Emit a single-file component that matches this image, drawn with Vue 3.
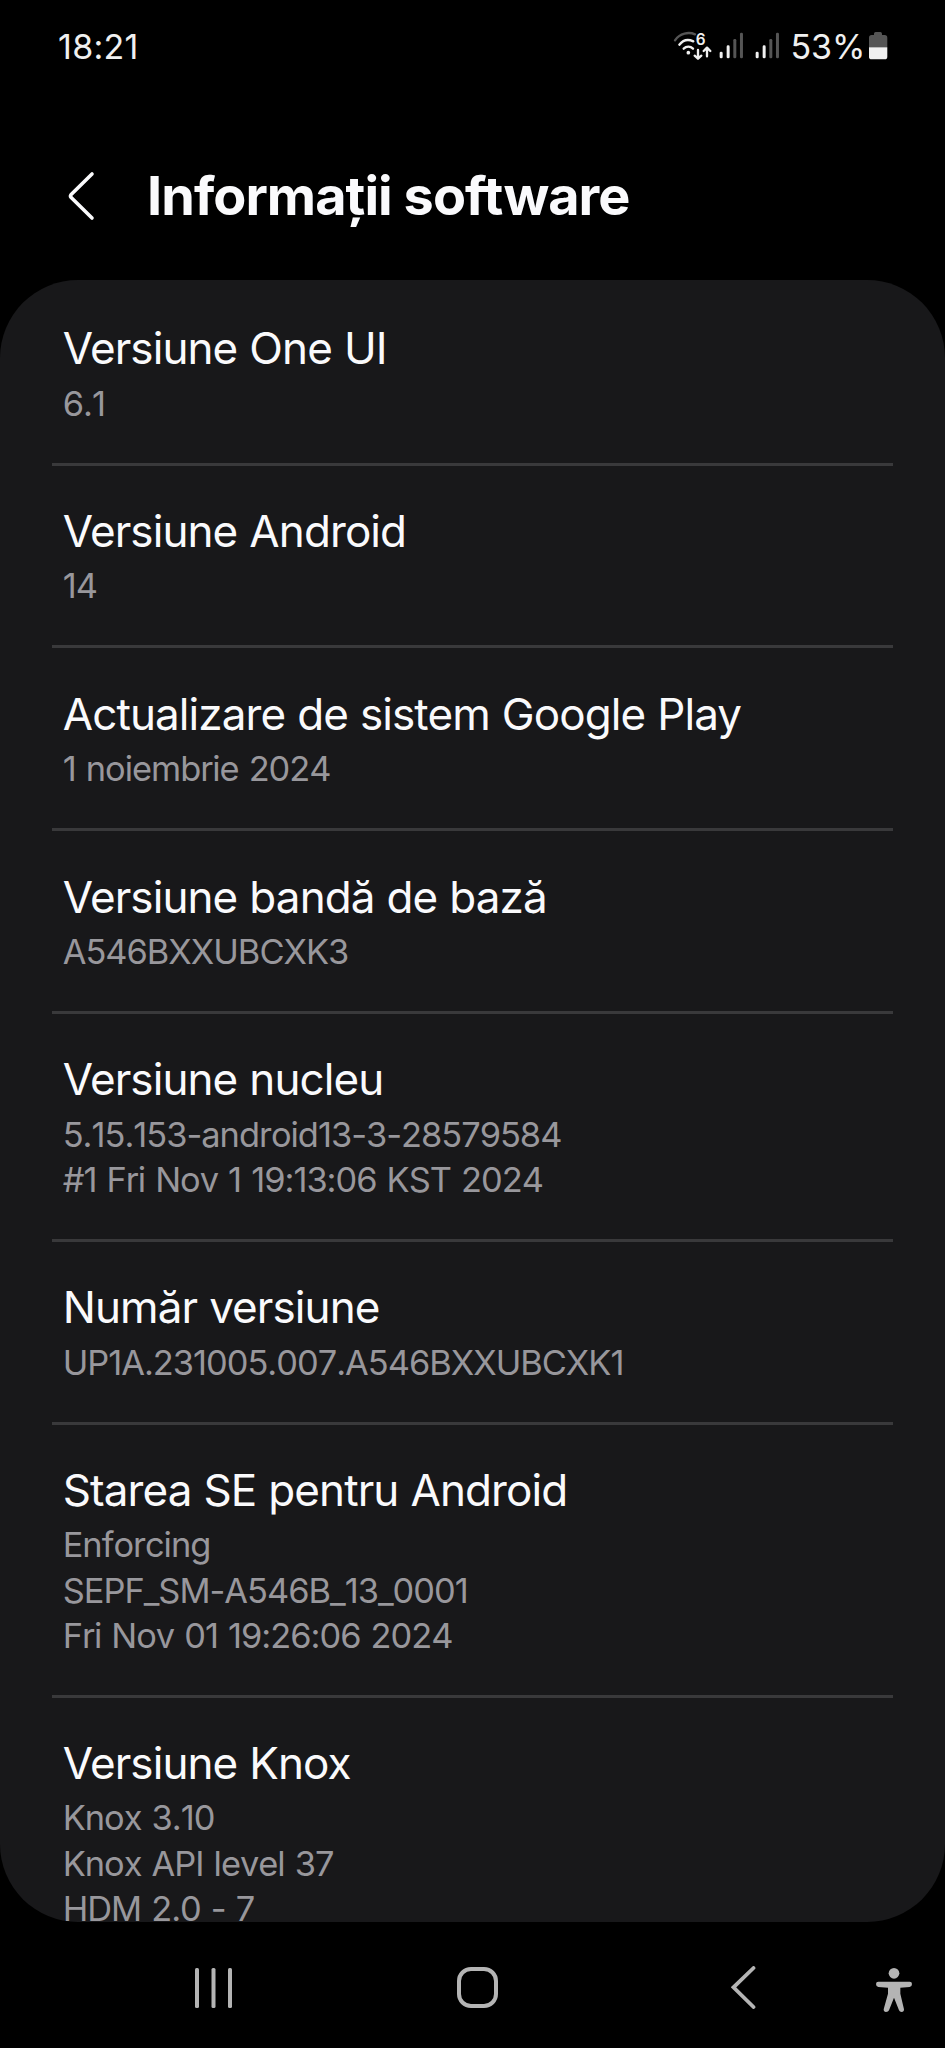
<template>
  <div class="screen">
    <header class="status-bar">
      <span class="status-time">18:21</span>
      <div class="status-tray">
        <!-- Wi-Fi 6 with traffic arrows -->
        <svg class="wifi" viewBox="0 0 117 90" fill="none" stroke-linecap="round" stroke-linejoin="round">
          <path d="M6 28 C20 6 48 2 66 10" stroke="#555" stroke-width="7" />
          <path d="M19 41 C30 27 46 24 61 31" stroke="#f0f0f0" stroke-width="7" />
          <path d="M32 53 C40 45 52 45 60 53" stroke="#f0f0f0" stroke-width="7" />
          <circle cx="46" cy="65" r="5.5" fill="#f0f0f0" />
          <text x="68" y="41" class="wifi-gen">6</text>
          <path d="M75 57 V82 M65 74 L75 83 L85 74" stroke="#f0f0f0" stroke-width="7" />
          <path d="M102 76 V51 M92 60 L102 50 L112 60" stroke="#f0f0f0" stroke-width="7" />
        </svg>
        <svg v-for="sim in 2" :key="sim" class="signal" viewBox="0 0 73 90">
          <rect x="2" y="62" width="9" height="20" rx="4" fill="#f0f0f0" />
          <rect x="23" y="43" width="9" height="39" rx="4" fill="#f0f0f0" />
          <rect x="43" y="24" width="9" height="58" rx="4" fill="#555" />
          <rect x="63" y="5" width="9" height="77" rx="4" fill="#555" />
        </svg>
        <span class="status-percent">53%</span>
        <svg class="battery" viewBox="0 0 55 90">
          <path d="M15 8 Q15 3 20 3 H34 Q39 3 39 8 V12 H47 Q55 12 55 20 V49 H0 V20 Q0 12 8 12 H15 Z" fill="#555" />
          <path d="M0 49 H55 V77 Q55 85 47 85 H8 Q0 85 0 77 Z" fill="#f0f0f0" />
        </svg>
      </div>
    </header>

    <div class="title-bar">
      <svg class="title-back" viewBox="0 0 28 50" fill="none">
        <path d="M25 3 L4.2 23.4 Q2.8 25 4.2 26.6 L25 47" />
      </svg>
      <h1 class="title">Informații software</h1>
    </div>

    <main class="card">
      <section v-for="item in items" :key="item.label" class="item">
        <h2 class="item-label">{{ item.label }}</h2>
        <p v-for="line in item.lines" :key="line" class="item-line">{{ line }}</p>
      </section>
    </main>

    <nav class="nav-bar">
      <svg class="nav-recents" viewBox="0 0 38 40">
        <rect x="0" y="0" width="4" height="40" rx="1.5" />
        <rect x="16.5" y="0" width="4" height="40" rx="1.5" />
        <rect x="33" y="0" width="4" height="40" rx="1.5" />
      </svg>
      <svg class="nav-home" viewBox="0 0 41 41" fill="none">
        <rect x="2" y="2" width="37" height="37" rx="12" />
      </svg>
      <svg class="nav-back" viewBox="0 0 25 43" fill="none">
        <path d="M22.5 2 L2.5 21.3 L22.5 41" />
      </svg>
      <svg class="nav-access" viewBox="0 0 108 132">
        <circle cx="54" cy="16" r="16" />
        <path
          d="M7 41 H101 Q108 41 108 48 Q108 56 101 57 L73 59 V77 L84 124 Q84 132 77 132 Q71 132 69 127 L54 89 L39 127 Q37 132 30 132 Q23 132 23 124 L36 77 V59 L7 57 Q0 56 0 48 Q0 41 7 41 Z"
        />
      </svg>
    </nav>
  </div>
</template>

<script setup>
const items = [
  { label: 'Versiune One UI', lines: ['6.1'] },
  { label: 'Versiune Android', lines: ['14'] },
  { label: 'Actualizare de sistem Google Play', lines: ['1 noiembrie 2024'] },
  { label: 'Versiune bandă de bază', lines: ['A546BXXUBCXK3'] },
  {
    label: 'Versiune nucleu',
    lines: ['5.15.153-android13-3-28579584', '#1 Fri Nov 1 19:13:06 KST 2024'],
  },
  { label: 'Număr versiune', lines: ['UP1A.231005.007.A546BXXUBCXK1'] },
  {
    label: 'Starea SE pentru Android',
    lines: ['Enforcing', 'SEPF_SM-A546B_13_0001', 'Fri Nov 01 19:26:06 2024'],
  },
  { label: 'Versiune Knox', lines: ['Knox 3.10', 'Knox API level 37', 'HDM 2.0 - 7'] },
]
</script>

<style>
body {
  margin: 0;
  background: #000;
}
</style>

<style scoped>
.screen {
  display: flex;
  flex-direction: column;
  width: 945px;
  height: 2048px;
  overflow: hidden;
  background: #000;
  color: #fafafc;
  font-family: Inter, 'Liberation Sans', sans-serif;
}

.status-bar {
  display: flex;
  justify-content: space-between;
  align-items: center;
  box-sizing: border-box;
  height: 92px;
  padding: 0 57.7px 0 58px;
  color: #f0f0f0;
  font-size: 34px;
}

.status-time {
  letter-spacing: 0.3px;
}

.status-tray {
  display: flex;
  align-items: center;
}

.status-tray svg {
  height: 30px;
  overflow: visible;
}

.wifi {
  width: 39px;
  margin-right: 7px;
}

.wifi-gen {
  fill: #f0f0f0;
  font-size: 46px;
  font-weight: 600;
}

.signal {
  width: 24.3px;
  margin-right: 11.7px;
}

.status-percent {
  margin: 0 3.5px 0 -0.5px;
}

.battery {
  width: 18.3px;
}

.title-bar {
  display: flex;
  align-items: center;
  box-sizing: border-box;
  height: 188px;
  padding: 20.5px 0 0 67px;
}

.title-back {
  width: 28px;
  height: 50px;
  margin-right: 52px;
  stroke: #fafafc;
  stroke-width: 3.6;
  stroke-linecap: round;
}

.title {
  margin: 0;
  font-size: 54px;
  font-weight: 650;
  line-height: 70px;
  letter-spacing: -0.95px;
}

.card {
  flex: none;
  box-sizing: border-box;
  height: 1641.7px;
  padding: 0 52.3px;
  overflow: hidden;
  border-radius: 78px;
  background: #18181a;
}

.item {
  padding: 34.3px 10.4px 36.9px;
  border-top: 3px solid #39393b;
}

.item:first-child {
  border-top-color: transparent;
}

.item-label {
  margin: 0;
  font-size: 44px;
  font-weight: 400;
  line-height: 63.3px;
  letter-spacing: -0.9px;
  word-spacing: 0.5px;
  white-space: nowrap;
}

.item-line {
  margin: 0;
  color: #98979c;
  font-size: 34.4px;
  line-height: 45.25px;
  letter-spacing: -1px;
  word-spacing: 1.4px;
  font-kerning: none;
  white-space: nowrap;
}

.nav-bar {
  display: flex;
  flex: 1;
  align-items: center;
  padding: 6px 32.5px 0 195px;
  fill: #b4b4b4;
  stroke-linecap: round;
}

.nav-recents {
  width: 38px;
  height: 40px;
  margin-right: 224.3px;
}

.nav-home {
  width: 41px;
  height: 41px;
  margin-right: 233px;
  fill: none;
  stroke: #b4b4b4;
  stroke-width: 4;
}

.nav-back {
  width: 25px;
  height: 43px;
  margin-right: 120px;
  fill: none;
  stroke: #b4b4b4;
  stroke-width: 3.8;
}

.nav-access {
  width: 36px;
  height: 44px;
  margin-top: 5px;
}
</style>
